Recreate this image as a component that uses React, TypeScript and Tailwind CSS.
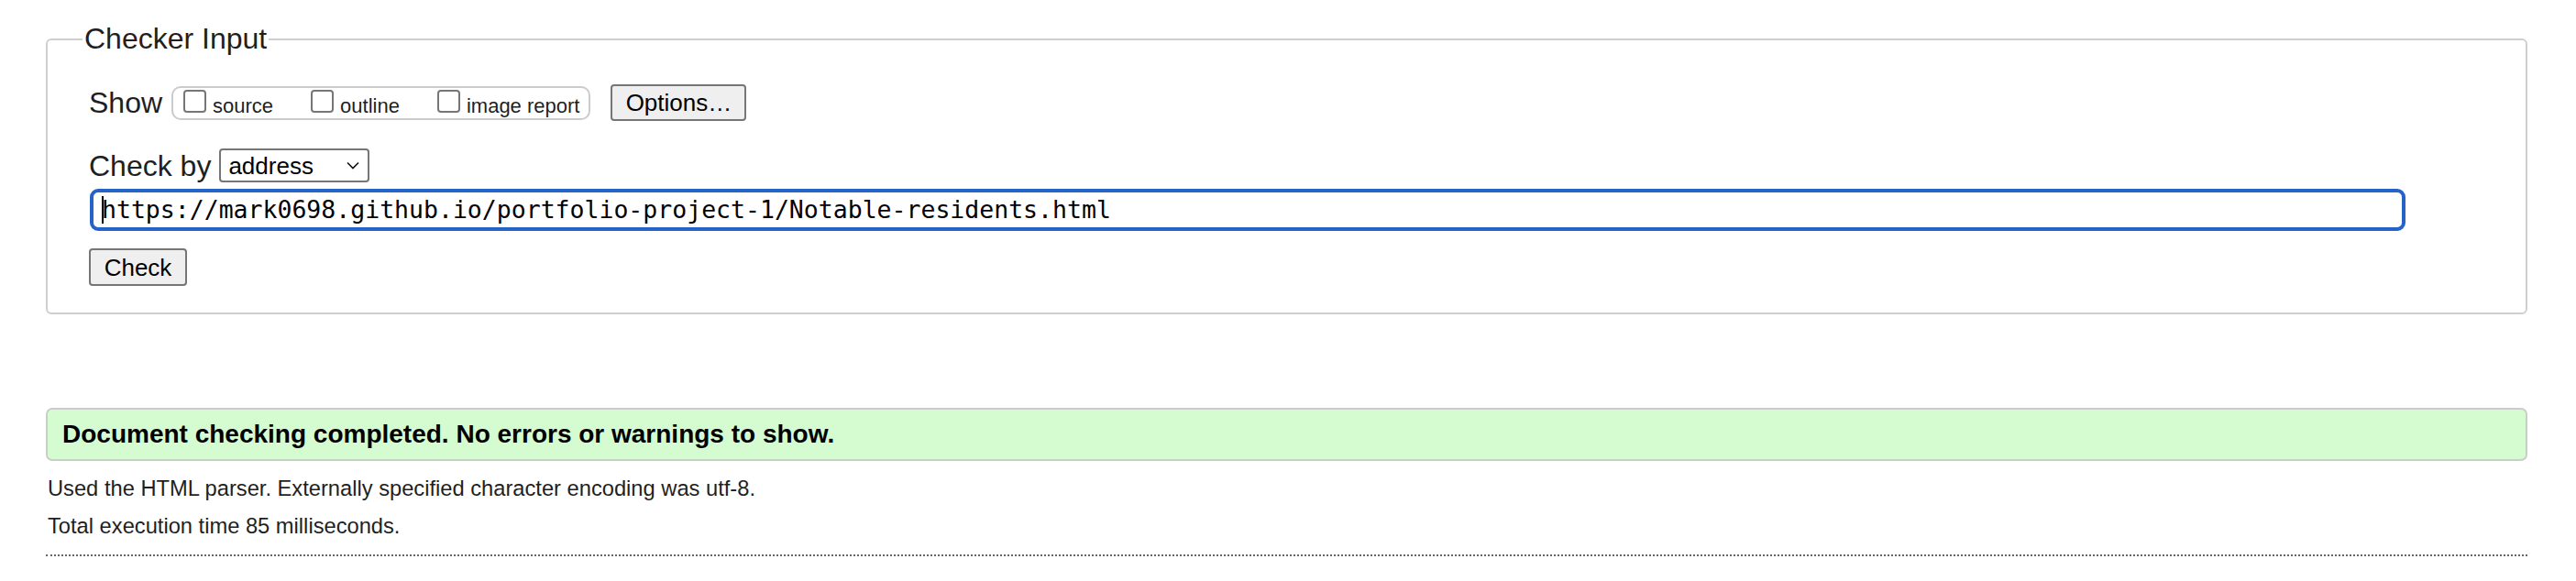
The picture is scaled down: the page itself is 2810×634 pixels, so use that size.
import React from 'react';

// Little grey square the browser would draw for an unchecked box
const Box = () => (
  <div className="w-[25px] h-[25px] shrink-0 rounded-[4px] border-2 border-[#767676] bg-white" />
);

const showOptions = ['source', 'outline', 'image report'];

const App = () => {
  return (
    <div className="w-full h-[634px] bg-white pl-[50px] pr-[53px] pt-[24px] font-['Liberation_Sans',Arial,sans-serif] text-[#1f1f1f]">
      <fieldset className="border-2 border-[#cfcfcf] rounded-[6px] pl-[45px] pb-[29px]">
        <legend className="ml-[-7px] px-[2px] text-[32px] leading-[37px]">Checker Input</legend>

        {/* Show row */}
        <div className="mt-[31px] flex items-center h-[40px]">
          <span className="text-[32px] leading-none">Show</span>
          <div className="ml-[10px] h-[37px] flex items-start pt-[2px] pl-[11px] pr-[10px] border-2 border-[#cbcbcb] rounded-[10px] gap-[41px]">
            {showOptions.map((opt) => (
              <label key={opt} className="flex items-baseline gap-[7px]">
                <Box />
                <span className="text-[22px] leading-none">{opt}</span>
              </label>
            ))}
          </div>
          <button className="ml-[22px] w-[148px] h-[40px] border-2 border-[#767676] rounded-[4px] bg-[#efefef] text-[26px] leading-none text-black">
            Options…
          </button>
        </div>

        {/* Check by row */}
        <div className="mt-[30px] flex items-center h-[37px]">
          <span className="text-[32px] leading-none">Check by</span>
          <div className="ml-[9px] w-[164px] h-[37px] border-2 border-[#767676] rounded-[4px] flex items-center justify-between pl-[8px] pr-[9px] text-black">
            <span className="text-[26px] leading-none">address</span>
            <svg width="14" height="9" viewBox="0 0 14 9" fill="none">
              <path d="M1 1.5 L7 7.5 L13 1.5" stroke="#111" strokeWidth="1.6" />
            </svg>
          </div>
        </div>

        {/* Address input, focused */}
        <div className="mt-[7px] ml-[1px] w-[2526px] h-[46px] border-[4px] border-[#2563c9] rounded-[9px] flex items-center pl-[9px] font-['DejaVu_Sans_Mono',monospace] text-[26.5px] text-black">
          <span className="w-[2px] h-[30px] bg-black mr-[-2px]" />
          <span className="leading-none">https://mark0698.github.io/portfolio-project-1/Notable-residents.html</span>
        </div>

        <button className="mt-[19px] block w-[107px] h-[41px] border-2 border-[#767676] rounded-[4px] bg-[#efefef] text-[26px] leading-none text-black">
          Check
        </button>
      </fieldset>

      <div className="mt-[102px] h-[58px] border-2 border-[#cccccc] rounded-[7px] bg-[#d5fcd0] flex items-center pl-[16px]">
        <p className="text-[28px] font-bold text-black leading-none">
          Document checking completed. No errors or warnings to show.
        </p>
      </div>

      <p className="mt-[17px] text-[23.7px] leading-[27px] pl-[2px]">
        Used the HTML parser. Externally specified character encoding was utf-8.
      </p>
      <p className="mt-[14px] text-[23.7px] leading-[27px] pl-[2px]">Total execution time 85 milliseconds.</p>

      <div className="mt-[17px] border-t-2 border-dotted border-[#666]" />
    </div>
  );
};

export default App;
